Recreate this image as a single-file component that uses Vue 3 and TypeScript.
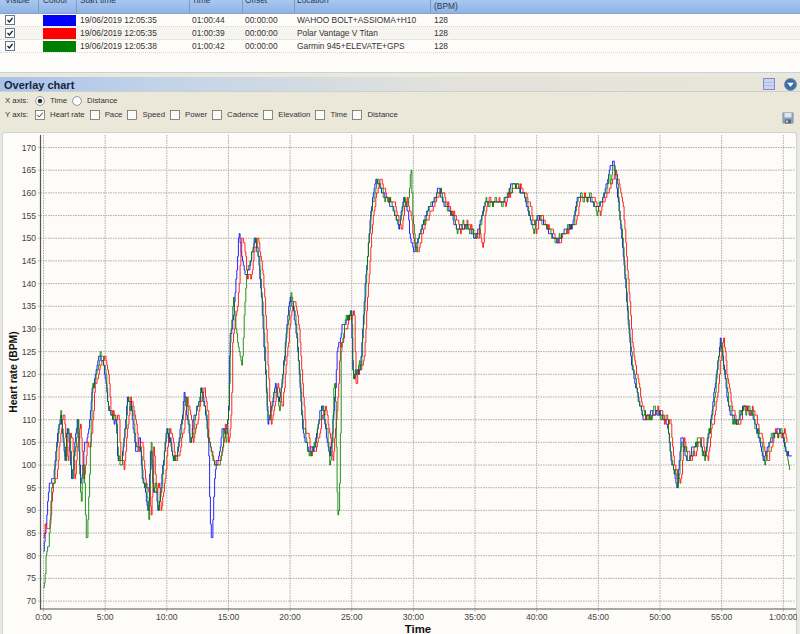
<script setup lang="ts">
type Key = [number, number]

interface Row { color: string; start: string; time: string; location: string }

const rows: Row[] = [
  { color: '#0000ff', start: '19/06/2019 12:05:35', time: '01:00:44', location: 'WAHOO BOLT+ASSIOMA+H10' },
  { color: '#ff0000', start: '19/06/2019 12:05:35', time: '01:00:39', location: 'Polar Vantage V Titan' },
  { color: '#008000', start: '19/06/2019 12:05:38', time: '01:00:42', location: 'Garmin 945+ELEVATE+GPS' }
]

const yOptions = [
  { label: 'Heart rate', on: true },
  { label: 'Pace', on: false },
  { label: 'Speed', on: false },
  { label: 'Power', on: false },
  { label: 'Cadence', on: false },
  { label: 'Elevation', on: false },
  { label: 'Time', on: false },
  { label: 'Distance', on: false }
]

const xAt = (t: number) => 43.5 + t * 12.33
const yAt = (v: number) => 147.5 + (170 - v) * 4.536

const base: Key[] = [
  [0, 80], [0.1, 84], [0.3, 90], [0.5, 97], [0.8, 97], [1, 103], [1.2, 108], [1.4, 111], [1.6, 105], [1.75, 101],
  [1.9, 108], [2.1, 105], [2.3, 96], [2.5, 104], [2.75, 110], [3, 96], [3.2, 100], [3.3, 105], [3.5, 105], [3.7, 108],
  [3.9, 116], [4.2, 120], [4.5, 124], [4.8, 123], [5.1, 118], [5.2, 113], [5.6, 110], [5.9, 110], [6, 102], [6.3, 100],
  [6.6, 108], [6.8, 115], [7.1, 113], [7.3, 108], [7.5, 103], [7.8, 106], [8, 97], [8.3, 94], [8.5, 89], [8.7, 105],
  [8.9, 94], [9.1, 95], [9.3, 90], [9.6, 97], [9.8, 103], [10, 108], [10.3, 105], [10.5, 101], [10.8, 102], [11, 106],
  [11.3, 112], [11.4, 116], [11.7, 110], [11.9, 105], [12.2, 110], [12.6, 114], [12.8, 117], [13.1, 112], [13.4, 104],
  [13.5, 90], [13.65, 82], [13.85, 96], [14, 100], [14.3, 103], [14.5, 109], [14.8, 106], [15, 112], [15.1, 128],
  [15.4, 133], [15.6, 140], [15.85, 151], [16.1, 146], [16.3, 142], [16.6, 142], [16.9, 147], [17.15, 150], [17.4, 146],
  [17.7, 136], [18, 120], [18.2, 109], [18.5, 113], [18.8, 118], [19.1, 113], [19.4, 120], [19.7, 130], [20, 137],
  [20.3, 134], [20.6, 126], [21, 108], [21.5, 103], [22, 104], [22.3, 110], [22.6, 113], [23, 106], [23.2, 101],
  [23.5, 110], [23.7, 118], [23.8, 125], [24.2, 130], [24.6, 132], [24.95, 134], [25.1, 119], [25.7, 122], [26.1, 140],
  [26.5, 155], [26.7, 159], [27, 163], [27.7, 159], [28.3, 157], [28.8, 152], [29.2, 159], [29.6, 155], [29.7, 150],
  [30.1, 147], [30.5, 151], [31.1, 156], [31.6, 158], [32, 161], [32.4, 158], [33.1, 155], [33.5, 152], [34.3, 153],
  [35, 150], [35.4, 153], [35.8, 158], [37.3, 158], [38, 162], [38.9, 160], [39.7, 152], [40.1, 155], [41.6, 149],
  [42.3, 152], [42.9, 153], [43.3, 159], [44.3, 159], [44.9, 156], [45.5, 160], [46.2, 168], [46.6, 158], [46.9, 150],
  [47.2, 140], [47.4, 132], [47.7, 122], [48, 118], [48.6, 110], [49.7, 112], [50.6, 109], [50.9, 101], [51.4, 95],
  [51.7, 106], [52.2, 101], [53.2, 106], [53.6, 101], [54.1, 110], [54.5, 118], [54.9, 128], [55.4, 116], [55.6, 112],
  [56.2, 109], [56.7, 113], [57.5, 111], [58.1, 105], [58.4, 101], [59.2, 107], [59.9, 107], [60.3, 102], [60.7, 102]
]

const redPatches: Key[][] = [
  [[0, 84], [0.15, 87], [0.5, 86], [0.8, 96], [1.1, 97]],
  [[13.4, 106], [13.9, 100], [14.3, 101], [14.6, 104]],
  [[35.3, 153], [35.65, 148], [35.8, 153]],
  [[45.8, 160], [46.4, 165], [46.7, 162], [47, 158], [47.2, 150]]
]

const greenPatches: Key[][] = [
  [[0, 73], [0.1, 75], [0.2, 80], [0.4, 82], [0.7, 96]],
  [[2.9, 100], [3.05, 91], [3.2, 100], [3.3, 100], [3.45, 84], [3.55, 84], [3.7, 95], [3.9, 112]],
  [[13.3, 106], [13.9, 100], [14.3, 100], [14.6, 105]],
  [[15.1, 125], [15.4, 137], [15.6, 130], [15.8, 126], [16.1, 121], [16.3, 135], [16.5, 143], [16.8, 145], [17.1, 150]],
  [[23.4, 104], [23.55, 118], [23.65, 118], [23.85, 88], [23.95, 90], [24.05, 100], [24.15, 126], [24.4, 130]],
  [[29.3, 157], [29.6, 158], [29.8, 166], [29.95, 155], [30.2, 147]],
  [[45.9, 161], [46.2, 166], [46.5, 164], [46.8, 152]],
  [[59.9, 108], [60.3, 102], [60.6, 98]]
]

function interp(keys: Key[], t: number): number {
  if (t <= keys[0][0]) return keys[0][1]
  for (let i = 1; i < keys.length; i++) {
    if (t <= keys[i][0]) {
      const [a, va] = keys[i - 1]
      const [b, vb] = keys[i]
      return va + ((vb - va) * (t - a)) / (b - a)
    }
  }
  return keys[keys.length - 1][1]
}

function noise(t: number, seed: number): number {
  const amp = t > 27 && t < 47 ? 0.8 : 1.25
  return amp * (Math.sin(t * 7.3 + seed) * 0.9 + Math.sin(t * 17.1 + seed * 2.3) * 0.7 + Math.sin(t * 41 + seed * 3.1) * 0.4)
}

function buildPath(shift: number, seed: number, scale: number, end: number, patches: Key[][]): string {
  let d = ''
  let last = NaN
  for (let i = 0; i * 0.0667 <= end; i++) {
    const t = i * 0.0667
    const patch = patches.find(p => t >= p[0][0] && t <= p[p.length - 1][0])
    const raw = patch ? interp(patch, t) + noise(t, seed) * 0.2 : interp(base, t - shift) + noise(t, seed) * scale
    const v = Math.round(raw)
    const x = xAt(t).toFixed(1)
    if (i === 0) d = `M${x} ${yAt(v).toFixed(1)}`
    else if (v === last) d += `H${x}`
    else d += `H${x}V${yAt(v).toFixed(1)}`
    last = v
  }
  return d
}

const series = [
  { color: '#0000ff', d: buildPath(0, 0.4, 0.35, 60.7, []) },
  { color: '#ff0000', d: buildPath(0.25, 2.1, 0.55, 60.35, redPatches) },
  { color: '#008000', d: buildPath(0.04, 4.3, 0.7, 60.6, greenPatches) }
]

const yTicks: number[] = []
for (let v = 70; v <= 170; v += 5) yTicks.push(v)

const xTicks = Array.from({ length: 13 }, (_, i) => {
  const m = i * 5
  return { x: xAt(m), label: m === 60 ? '1:00:00' : `${m}:00` }
})
</script>

<template>
  <div class="page">
    <section class="grid">
      <div class="head">
        <div class="c c-vis">Visible</div>
        <div class="c c-col">Colour</div>
        <div class="c c-start">Start time</div>
        <div class="c c-time">Time</div>
        <div class="c c-off">Offset</div>
        <div class="c c-loc">Location</div>
        <div class="c c-bpm low">(BPM)</div>
      </div>
      <div class="body">
        <div v-for="r in rows" :key="r.color" class="row">
          <div class="c c-vis">
            <svg class="tick" viewBox="0 0 10 10">
              <rect x="0.5" y="0.5" width="9" height="9" fill="#fff" stroke="#5f7b9b" />
              <path d="M2.5 5 L4.4 7 L7.6 2.8" fill="none" stroke="#222" stroke-width="1.4" />
            </svg>
          </div>
          <div class="c c-col"><span class="swatch" :style="{ background: r.color }"></span></div>
          <div class="c c-start">{{ r.start }}</div>
          <div class="c c-time">{{ r.time }}</div>
          <div class="c c-off">00:00:00</div>
          <div class="c c-loc">{{ r.location }}</div>
          <div class="c c-bpm">128</div>
        </div>
      </div>
    </section>

    <section class="overlay">
      <header class="title">
        <h2>Overlay chart</h2>
        <svg class="ico-layout" viewBox="0 0 12 12">
          <rect x="0.5" y="0.5" width="11" height="11" fill="#c9d4f2" stroke="#8488cf" />
          <rect x="1" y="5" width="10" height="2" fill="#fff" />
          <path d="M1 5H11M1 7H11" stroke="#7f86c8" stroke-width="0.7" />
        </svg>
        <svg class="ico-drop" viewBox="0 0 13 13">
          <circle cx="6.5" cy="6.5" r="6" fill="#3c6ea6" stroke="#6f93bd" />
          <path d="M3.2 4.8H9.8L6.5 9Z" fill="#fff" />
        </svg>
      </header>

      <div class="tools">
        <div class="opts">
          <div class="opt-row">
            <span class="axis">X axis:</span>
            <span class="opt">
              <svg class="box" viewBox="0 0 10 10">
                <circle cx="5" cy="5" r="4.4" fill="#fff" stroke="#77828f" stroke-width="0.8" />
                <circle cx="5" cy="5" r="2.3" fill="#333" />
              </svg>
              Time
            </span>
            <span class="opt">
              <svg class="box" viewBox="0 0 10 10">
                <circle cx="5" cy="5" r="4.4" fill="#fff" stroke="#77828f" stroke-width="0.8" />
              </svg>
              Distance
            </span>
          </div>
          <div class="opt-row">
            <span class="axis">Y axis:</span>
            <span v-for="o in yOptions" :key="o.label" class="opt">
              <svg class="box" viewBox="0 0 10 10">
                <rect x="0.5" y="0.5" width="9" height="9" fill="#fbfbf8" stroke="#6d6d6d" stroke-width="0.8" />
                <path v-if="o.on" d="M2.2 4.8 L4.2 7 L7.8 2.6" fill="none" stroke="#444" stroke-width="1" />
              </svg>
              {{ o.label }}
            </span>
          </div>
        </div>
        <svg class="ico-save" viewBox="0 0 12 12">
          <rect x="0.5" y="0.5" width="11" height="11" rx="1" fill="#8ca1b8" stroke="#a9b7c8" />
          <rect x="2.5" y="1" width="7" height="4.5" fill="#dfe5ec" />
          <rect x="3" y="7.5" width="6" height="4" fill="#56687c" />
          <rect x="4" y="8.5" width="2" height="2" fill="#cfd6de" />
        </svg>
      </div>

      <div class="chart">
        <svg class="plot" viewBox="3 133 794 501" width="794" height="501">
          <g class="gridlines">
            <line v-for="v in yTicks" :key="'h' + v" x1="38" :x2="795" :y1="yAt(v)" :y2="yAt(v)" />
            <line v-for="t in xTicks" :key="'v' + t.label" :x1="t.x" :x2="t.x" y1="135" y2="612" />
          </g>
          <path
            v-for="s in series"
            :key="s.color"
            class="trace"
            :d="s.d"
            :stroke="s.color"
          />
          <line class="axis-line" x1="40.5" x2="40.5" y1="135" y2="609.5" />
          <line class="axis-line" x1="40" x2="796" y1="609" y2="609" />
          <text v-for="v in yTicks" :key="'yl' + v" class="tick-y" x="36" :y="yAt(v) + 3">{{ v }}</text>
          <text v-for="t in xTicks" :key="'xl' + t.label" class="tick-x" :x="t.x" y="620">{{ t.label }}</text>
          <text class="title-y" transform="translate(17 372) rotate(-90)">Heart rate (BPM)</text>
          <text class="title-x" x="418" y="633">Time</text>
        </svg>
      </div>
    </section>
  </div>
</template>

<style>
html,
body {
  margin: 0;
  background: #ece8d9;
}
</style>

<style scoped>
.page {
  width: 800px;
  height: 634px;
  overflow: hidden;
  display: flex;
  flex-direction: column;
  font-family: "Liberation Sans", Arial, sans-serif;
  color: #333;
  background: #ece8d9;
}

.grid {
  height: 73px;
  flex: none;
  background: #fdfcf8;
  border-bottom: 1px solid #c3d3e6;
  box-sizing: border-box;
}
.head {
  height: 13px;
  display: flex;
  overflow: hidden;
  align-items: stretch;
  background: linear-gradient(#a9c8f0, #8fb3e6);
  border-bottom: 1px solid #89a2c4;
  box-sizing: content-box;
  font-size: 8.4px;
  color: #2b3a50;
}
.head .c {
  display: flex;
  align-items: flex-end;
  padding-bottom: 8px;
  line-height: 10px;
  height: 13px;
  box-sizing: border-box;
  border-right: 1px solid #7f9bc2;
  white-space: nowrap;
}
.head .low {
  padding-bottom: 2px;
  border-right: none;
}
.row {
  height: 13px;
  display: flex;
  align-items: center;
  box-sizing: border-box;
  border-bottom: 1px dotted #d8d6cf;
  font-size: 8.4px;
  white-space: nowrap;
}
.row:nth-child(2) {
  background: #f6f4ee;
}
.c {
  padding-left: 3px;
  box-sizing: border-box;
  flex: none;
}
.c-vis { width: 39px; padding-left: 5px; display: flex; align-items: center; }
.c-col { width: 38px; padding-left: 4px; display: flex; align-items: center; }
.c-start { width: 113px; }
.c-time { width: 53px; padding-left: 2px; }
.c-off { width: 52px; padding-left: 2px; }
.c-loc { width: 136px; padding-left: 2px; }
.c-bpm { flex: 1; }
.tick {
  width: 10px;
  height: 10px;
  display: block;
}
.swatch {
  display: block;
  width: 33px;
  height: 11px;
}

.overlay {
  flex: 1;
  display: flex;
  flex-direction: column;
  min-height: 0;
  margin-top: 4px;
}
.title {
  height: 15px;
  flex: none;
  display: flex;
  align-items: center;
  padding: 0 3px 0 4px;
  background: linear-gradient(90deg, #a7c3ea 0%, #c2d3e8 20%, #e2e2dc 55%, #e9e6d8 100%);
  border-bottom: 1px solid #c9d0d2;
  box-sizing: border-box;
}
.title h2 {
  margin: 1px 0 0;
  font-size: 11px;
  font-weight: 700;
  color: #16243f;
  flex: 1;
}
.ico-layout {
  width: 12px;
  height: 12px;
  margin-right: 9px;
}
.ico-drop {
  width: 13px;
  height: 13px;
}

.tools {
  height: 40px;
  flex: none;
  display: flex;
  justify-content: space-between;
  align-items: flex-start;
  padding: 3px 6px 0 5px;
  box-sizing: border-box;
  font-size: 7.8px;
  color: #333;
}
.opts {
  display: flex;
  flex-direction: column;
  gap: 3px;
}
.opt-row {
  height: 11px;
  display: flex;
  align-items: center;
  gap: 5px;
}
.axis {
  width: 25px;
}
.opt {
  display: inline-flex;
  align-items: center;
  gap: 5px;
}
.box {
  width: 10px;
  height: 10px;
  display: block;
}
.ico-save {
  width: 12px;
  height: 12px;
  margin-top: 17px;
}

.chart {
  flex: 1;
  min-height: 0;
  margin: 0 3px 0 2px;
  background: #fdfcf8;
  border: 1px solid #c5d4e4;
  border-bottom: none;
  border-radius: 3px 3px 0 0;
}
.plot {
  display: block;
  font-family: "Liberation Sans", Arial, sans-serif;
}
.gridlines line {
  stroke: #8d8d8d;
  stroke-width: 1;
  stroke-dasharray: 1.5 1;
  opacity: 0.7;
}
.trace {
  fill: none;
  stroke-width: 1;
  stroke-linejoin: miter;
  opacity: 0.85;
}
.axis-line {
  stroke: #555;
  stroke-width: 1.2;
}
.tick-y {
  font-size: 8.6px;
  fill: #444;
  text-anchor: end;
}
.tick-x {
  font-size: 8.6px;
  fill: #444;
  text-anchor: middle;
}
.title-y {
  font-size: 10.4px;
  font-weight: 700;
  fill: #111;
  text-anchor: middle;
}
.title-x {
  font-size: 11.4px;
  font-weight: 700;
  fill: #111;
  text-anchor: middle;
}
</style>
